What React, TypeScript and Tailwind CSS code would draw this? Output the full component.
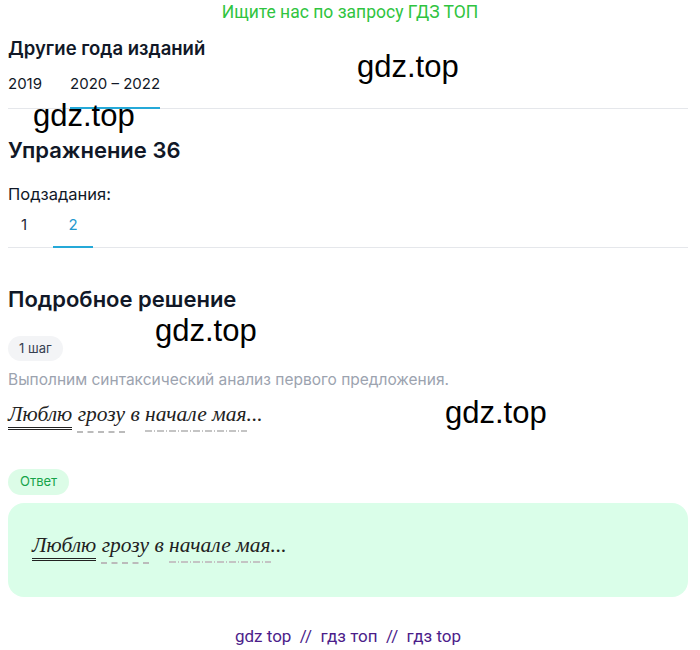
import React from "react";

const UI = { fontFamily: "Inter, 'Noto Sans', sans-serif" };
const WM = { fontFamily: "'Liberation Sans', Arial, sans-serif" };

function Watermark({ className }: { className: string }) {
  return (
    <span className={`absolute text-[31px] leading-none text-black pointer-events-none ${className}`} style={WM}>
      gdz.top
    </span>
  );
}

function Sentence() {
  return (
    <p className="text-[21.5px] leading-[28px] italic text-[#222]" style={{ fontFamily: "'Liberation Serif', 'DejaVu Serif', serif" }}>
      <span className="border-b-[3px] border-double border-[#222] pb-[1px]">Люблю</span>{" "}
      <span className="underline decoration-dashed decoration-[#bbb] decoration-[1.5px] underline-offset-[10px]">грозу</span>{" "}
      в{" "}
      <span className="relative">
        начале мая
        <span className="absolute left-0 right-0 -bottom-[6px] h-[2px] bg-[repeating-linear-gradient(90deg,#c4c4c4_0_7px,transparent_7px_9px,#c4c4c4_9px_10px,transparent_10px_12px)]" />
      </span>
      ...
    </p>
  );
}

export default function App() {
  return (
    <div className="relative w-[700px] h-[650px] bg-white text-[#111827]" style={UI}>
      <div className="text-center text-[17.5px] leading-[22px] text-[#2fc440] pt-[1px]" style={{ fontFamily: "Roboto, sans-serif" }}>
        Ищите нас по запросу ГДЗ ТОП
      </div>

      <div className="pl-2 pr-3">
        <h2 className="mt-[13px] text-[18.5px] leading-[24px] font-semibold">Другие года изданий</h2>
        <div className="mt-[10px] flex gap-[28px] border-b border-[#e5e7eb] text-[15px]">
          <span className="pb-[12px] pt-[3px]">2019</span>
          <span className="pb-[10px] pt-[3px] border-b-2 border-[#25a9d8] -mb-px">2020 – 2022</span>
        </div>

        <h1 className="mt-[27px] text-[22px] leading-[28px] font-semibold">Упражнение 36</h1>
        <div className="mt-[20px] text-[16.5px] leading-[20px]">Подзадания:</div>
        <div className="mt-[7px] flex border-b border-[#e5e7eb] text-[15px]">
          <span className="w-[45px] pl-[13px] pt-[3px] pb-[11px] text-[#1f2937]">1</span>
          <span className="w-[40px] text-center pt-[3px] pb-[9px] text-[#2499cf] border-b-2 border-[#25a9d8] -mb-px">2</span>
        </div>

        <h2 className="mt-[37px] text-[22px] leading-[28px] font-semibold">Подробное решение</h2>
        <div className="mt-[23px] inline-flex items-center h-[25px] px-[11px] rounded-full bg-[#f3f4f6] text-[13px] text-[#374151]">
          1 шаг
        </div>
        <div className="mt-[9px] text-[15.5px] leading-[20px] text-[#9ca3af]">
          Выполним синтаксический анализ первого предложения.
        </div>
        <div className="mt-[10px] h-[38px]">
          <Sentence />
        </div>

        <div className="mt-[31px] inline-flex items-center h-[26px] px-[12px] rounded-full bg-[#dcfce7] text-[13px] text-[#16a34a]">
          Ответ
        </div>
        <div className="mt-[8px] h-[94px] rounded-2xl bg-[#dafee9] px-[24px] pt-[28px]">
          <Sentence />
        </div>

        <div className="mt-[27px] text-center text-[17px] text-[#4c1d8a]" style={{ fontFamily: "Roboto, sans-serif" }}>
          gdz top&nbsp;&nbsp;//&nbsp;&nbsp;гдз топ&nbsp;&nbsp;//&nbsp;&nbsp;гдз top
        </div>
      </div>

      <Watermark className="left-[357px] top-[51px]" />
      <Watermark className="left-[33px] top-[100px]" />
      <Watermark className="left-[155px] top-[315px]" />
      <Watermark className="left-[445px] top-[397px]" />
    </div>
  );
}
